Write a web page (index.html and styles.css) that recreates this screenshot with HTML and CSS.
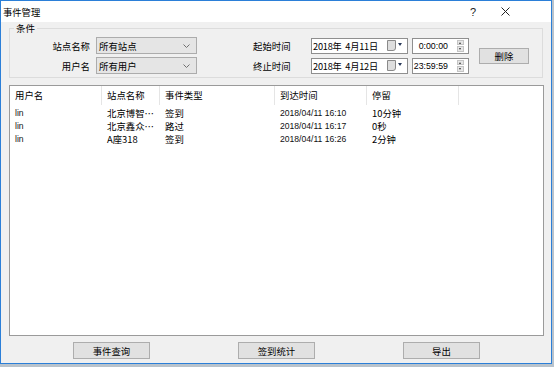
FILE: index.html
```html
<!DOCTYPE html>
<html lang="zh-CN">
<head>
  <meta charset="UTF-8">
  <title>事件管理</title>
  <link rel="stylesheet" href="styles.css">
</head>
<body>
  <div class="window">
    <!-- Title bar -->
    <div class="titlebar">
      <span class="title">事件管理</span>
      <span class="help">?</span>
      <span class="close">
        <svg width="9" height="9" viewBox="0 0 9 9"><path d="M0.5 0.5 L8.5 8.5 M8.5 0.5 L0.5 8.5" stroke="#222" stroke-width="1"/></svg>
      </span>
    </div>

    <div class="body">
      <!-- Filter conditions -->
      <fieldset class="group">
        <legend>条件</legend>
        <div class="cond">
          <div class="cond-rows">
            <div class="cond-row">
              <span class="lbl">站点名称</span>
              <div class="select">
                <span>所有站点</span>
                <svg width="7" height="4" viewBox="0 0 7 4"><path d="M0.5 0.5 L3.5 3.5 L6.5 0.5" fill="none" stroke="#707070" stroke-width="1"/></svg>
              </div>
              <span class="lbl2">起始时间</span>
              <div class="date">
                <span class="date-text">2018年&nbsp; 4月11日</span>
                <span class="cal"></span>
                <span class="tri"></span>
              </div>
              <div class="time">
                <span>0:00:00</span>
                <div class="spin"><span class="up"></span><span class="down"></span></div>
              </div>
            </div>
            <div class="cond-row">
              <span class="lbl">用户名</span>
              <div class="select">
                <span>所有用户</span>
                <svg width="7" height="4" viewBox="0 0 7 4"><path d="M0.5 0.5 L3.5 3.5 L6.5 0.5" fill="none" stroke="#707070" stroke-width="1"/></svg>
              </div>
              <span class="lbl2">终止时间</span>
              <div class="date">
                <span class="date-text">2018年&nbsp; 4月12日</span>
                <span class="cal"></span>
                <span class="tri"></span>
              </div>
              <div class="time">
                <span>23:59:59</span>
                <div class="spin"><span class="up"></span><span class="down"></span></div>
              </div>
            </div>
          </div>
          <button class="btn btn-del">删除</button>
        </div>
      </fieldset>

      <!-- Event list -->
      <div class="list">
        <div class="list-head">
          <div class="cell">用户名</div>
          <div class="cell">站点名称</div>
          <div class="cell">事件类型</div>
          <div class="cell">到达时间</div>
          <div class="cell">停留</div>
        </div>
        <div class="list-row">
          <div class="cell num">lin</div>
          <div class="cell">北京博智…</div>
          <div class="cell">签到</div>
          <div class="cell num">2018/04/11 16:10</div>
          <div class="cell">10分钟</div>
        </div>
        <div class="list-row">
          <div class="cell num">lin</div>
          <div class="cell">北京鑫众…</div>
          <div class="cell">路过</div>
          <div class="cell num">2018/04/11 16:17</div>
          <div class="cell">0秒</div>
        </div>
        <div class="list-row">
          <div class="cell num">lin</div>
          <div class="cell">A座318</div>
          <div class="cell">签到</div>
          <div class="cell num">2018/04/11 16:26</div>
          <div class="cell">2分钟</div>
        </div>
      </div>

      <!-- Bottom actions -->
      <div class="actions">
        <button class="btn">事件查询</button>
        <button class="btn">签到统计</button>
        <button class="btn">导出</button>
      </div>
    </div>
  </div>
</body>
</html>
```

FILE: styles.css
```css
body {
  margin: 0;
  background: #b9c3cc;
  font-family: "Noto Sans CJK SC", "Liberation Sans", sans-serif;
  font-size: 9.4px;
  color: #000;
}

.window {
  width: 552px;
  height: 364px;
  box-sizing: border-box;
  border: 1px solid #2b7fd8;
  background: #f0f0f0;
  display: flex;
  flex-direction: column;
}

/* Title bar */
.titlebar {
  height: 21px;
  flex-shrink: 0;
  background: #fff;
  display: flex;
  align-items: center;
  padding-left: 2px;
}

.title {
  flex: 1;
  font-size: 9.3px;
}

.help {
  font-family: "Liberation Sans", sans-serif;
  font-size: 11px;
  width: 31px;
  color: #222;
}

.close {
  display: flex;
  width: 50px;
}

.body {
  padding-left: 8px;
}

/* Group box */
.group {
  margin: 0;
  padding: 0;
  width: 534px;
  box-sizing: border-box;
  border: 1px solid #dcdcdc;
}

.group legend {
  font-size: 9.5px;
  line-height: 12px;
  padding: 0 2px;
  margin-left: 4px;
}

.cond {
  display: flex;
  align-items: center;
  padding: 3px 0 3px;
}

.cond-rows {
  display: flex;
  flex-direction: column;
  gap: 3px;
}

.cond-row {
  display: flex;
  align-items: center;
  height: 17px;
}

.lbl {
  width: 80px;
  text-align: right;
  margin-right: 6px;
}

.lbl2 {
  width: 58px;
  margin-left: 56px;
}

.select {
  width: 101px;
  height: 17px;
  box-sizing: border-box;
  border: 1px solid #acacac;
  background: #e5e5e5;
  display: flex;
  align-items: center;
  justify-content: space-between;
  padding: 0 6px 0 2px;
}

.date {
  width: 97px;
  height: 16px;
  box-sizing: border-box;
  border: 1px solid #8f8f8f;
  background: #fff;
  display: flex;
  align-items: center;
  padding-left: 1px;
}

.date-text {
  flex: 1;
  font-size: 9.2px;
  letter-spacing: -0.2px;
}

.cal {
  width: 7px;
  height: 9px;
  border: 1px solid #8a8a8a;
  border-radius: 0 0 3px 0;
  background: #dedede;
}

.tri {
  width: 0;
  height: 0;
  border-left: 2.5px solid transparent;
  border-right: 2.5px solid transparent;
  border-top: 3px solid #2a3a5a;
  margin: 0 5px 3px 2px;
}

.time {
  width: 57px;
  height: 16px;
  margin-left: 4px;
  box-sizing: border-box;
  border: 1px solid #8f8f8f;
  background: #fff;
  display: flex;
  align-items: center;
  justify-content: flex-end;
  font-family: "Liberation Sans", sans-serif;
  font-size: 8.8px;
}

.spin {
  width: 7px;
  height: 12px;
  margin: 0 4px 0 9px;
  display: flex;
  flex-direction: column;
  gap: 1px;
}

.spin span {
  flex: 1;
  background: #e6e6e6;
  border: 1px solid #c4c4c4;
  box-sizing: border-box;
  position: relative;
}

.spin .up::after,
.spin .down::after {
  content: "";
  position: absolute;
  left: 1px;
  border-left: 1.5px solid transparent;
  border-right: 1.5px solid transparent;
}

.spin .up::after {
  top: 1px;
  border-bottom: 2px solid #333;
}

.spin .down::after {
  top: 1px;
  border-top: 2px solid #333;
}

/* Buttons */
.btn {
  width: 77px;
  height: 17px;
  padding: 0;
  border: 1px solid #adadad;
  background: #e1e1e1;
  font-family: "Noto Sans CJK SC", sans-serif;
  font-size: 9.4px;
  color: #000;
}

.btn-del {
  width: 50px;
  height: 16px;
  margin-left: 10px;
  margin-top: 1px;
}

/* List view */
.list {
  margin-top: 7px;
  width: 535px;
  height: 251px;
  box-sizing: border-box;
  border: 1px solid #9a9a9a;
  background: #fff;
}

.list-head,
.list-row {
  display: grid;
  grid-template-columns: 92px 58px 115px 92px 92px;
  align-items: center;
}

.list-head {
  height: 19px;
  margin-bottom: 1px;
}

.list-head .cell {
  height: 19px;
  line-height: 19px;
  border-right: 1px solid #e5e5e5;
}

.list-row {
  height: 13px;
}

.cell {
  padding-left: 5px;
  white-space: nowrap;
  overflow: hidden;
}

.num {
  font-family: "Liberation Sans", sans-serif;
  font-size: 8.6px;
  color: #111;
}

.actions {
  display: flex;
  gap: 88px;
  margin-top: 6px;
  padding-left: 64px;
}
```
